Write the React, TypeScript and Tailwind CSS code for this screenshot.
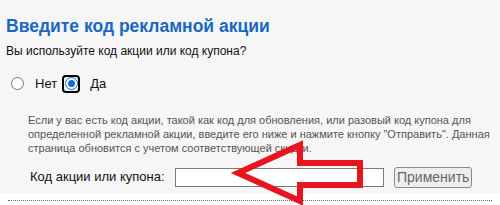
import React, { useState } from 'react';

export default function App() {
    const [useCode, setUseCode] = useState(true);
    const [code, setCode] = useState('');

    return (
        <div className="relative w-[500px] h-[205px] overflow-hidden bg-white font-['Liberation_Sans',Arial,sans-serif]">
            <div className="bg-[#f6f6f6] h-[193px] pl-[6px] pt-[15px]">
                <h1 className="text-[17.5px] leading-[22px] font-bold text-[#1a67c1]">Введите код рекламной акции</h1>
                <p className="mt-[6px] text-[12px] leading-[16px] text-[#111]">Вы используйте код акции или код купона?</p>

                {/* Да / Нет */}
                <div className="flex items-center mt-[15px] ml-[5px] text-[13px] text-[#111]">
                    <button onClick={() => setUseCode(false)} className="flex items-center">
                        <span className="w-[13px] h-[13px] rounded-full border border-[#777] bg-white flex items-center justify-center">
                            {!useCode && <span className="w-[7px] h-[7px] rounded-full bg-[#0b6fd6]"></span>}
                        </span>
                        <span className="ml-[11px]">Нет</span>
                    </button>
                    <button onClick={() => setUseCode(true)} className="flex items-center ml-[5px]">
                        <span className="w-[18px] h-[18px] rounded-[4px] border-2 border-black flex items-center justify-center">
                            <span className={`w-[13px] h-[13px] rounded-full border ${useCode ? 'border-[#0b6fd6]' : 'border-[#777]'} bg-white flex items-center justify-center`}>
                                {useCode && <span className="w-[7px] h-[7px] rounded-full bg-[#0b6fd6]"></span>}
                            </span>
                        </span>
                        <span className="ml-[10px]">Да</span>
                    </button>
                </div>

                <p className="mt-[19px] ml-[22px] w-[464px] text-[11px] leading-[14px] text-[#555]">
                    Если у вас есть код акции, такой как код для обновления, или разовый код купона для определенной рекламной акции, введите его ниже и нажмите кнопку "Отправить". Данная страница обновится с учетом соответствующей скидки.
                </p>

                <div className="flex items-center mt-[12px] ml-[24px] h-[21px]">
                    <label className="text-[13px] text-[#111] w-[145px]">Код акции или купона:</label>
                    <input
                        value={code}
                        onChange={(e) => setCode(e.target.value)}
                        className="w-[209px] h-[19px] border border-[#7a7a7a] bg-white outline-none px-1 text-[13px]"
                    />
                    <button className="ml-[10px] h-[21px] px-[2px] border border-[#8a8a8a] rounded-[3px] bg-[#eeeeee] text-[14px] leading-[17px] text-[#666]">
                        Применить
                    </button>
                </div>
            </div>

            <div className="mx-[8px] mt-[7px] border-t border-dotted border-[#666]"></div>

            {/* красная стрелка поверх поля */}
            <svg className="absolute left-0 top-0 pointer-events-none" width="500" height="205" viewBox="0 0 500 205">
                <polygon
                    points="238,173 300,145 300,163 360,163 360,185 300,185 300,201"
                    fill="none"
                    stroke="#e8141e"
                    strokeWidth="6"
                    strokeLinejoin="miter"
                />
            </svg>
        </div>
    );
}
